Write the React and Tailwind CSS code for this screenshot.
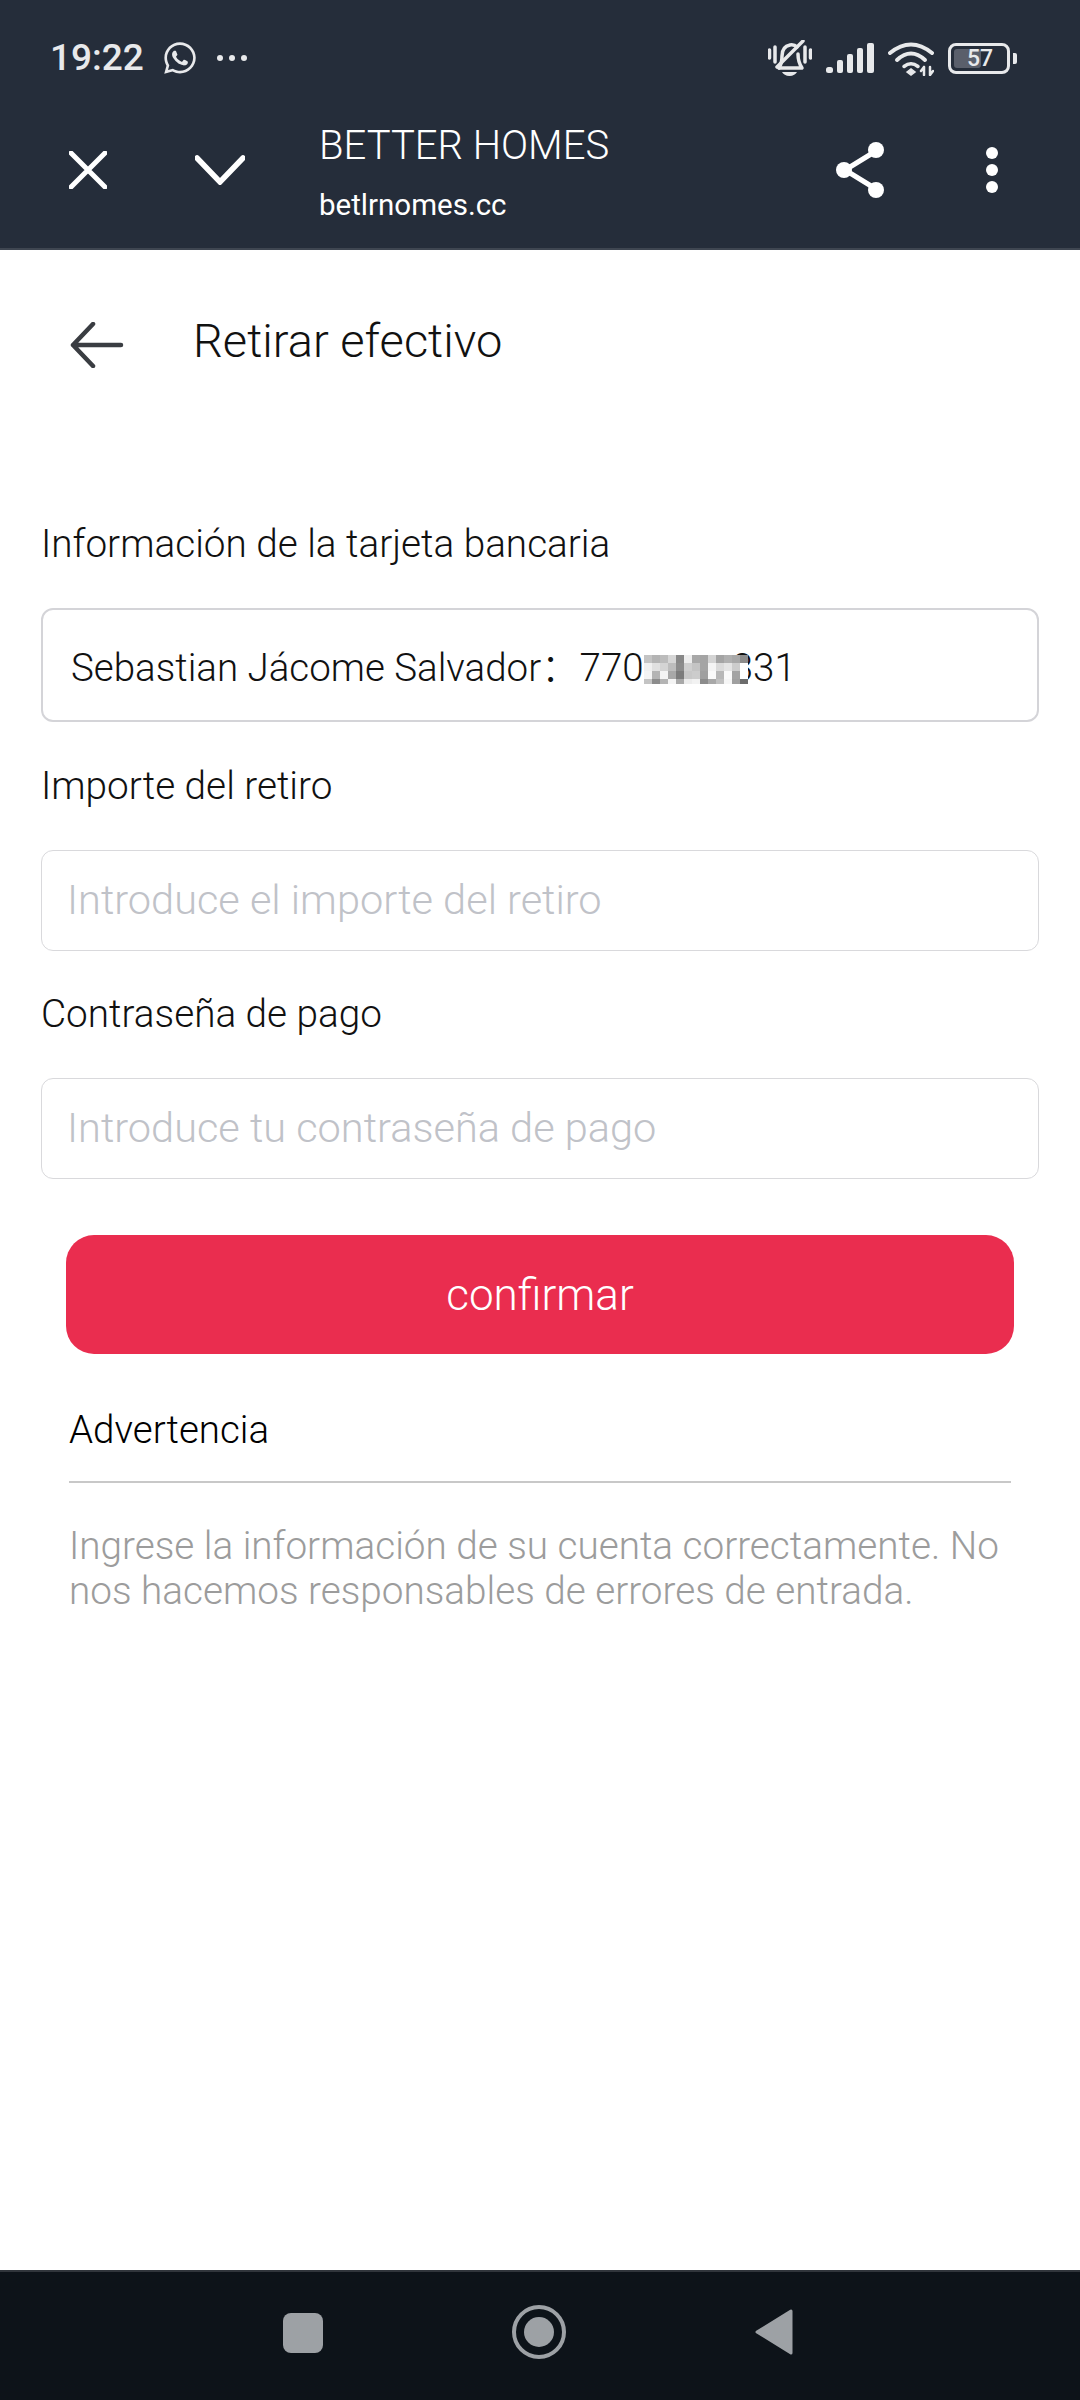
import React from 'react';
import { FaWhatsapp } from 'react-icons/fa';

const MOSAIC = [
  ['#c4c4c4', '#b4b4b4', '#bcbcbc', '#d6d6d6', '#888888', '#eeeeee', '#a8a8a8', '#a4a4a4', '#d4d4d4', '#a4a4a4', '#b0b0b0', '#a8a8a8', '#8c8c8c'],
  ['#f0f0f0', '#e0e0e0', '#d4d4d4', '#bdbdbd', '#8c8c8c', '#cfcfcf', '#c4c4c4', '#a4a4a4', '#f4f4f4', '#dadada', '#e4e4e4', '#cccccc', '#ffffff'],
  ['#f4f4f4', '#b4b4b4', '#f4f4f4', '#a8a8a8', '#7c7c7c', '#c8c8c8', '#cccccc', '#a0a0a0', '#fafafa', '#b8b8b8', '#fafafa', '#a4a4a4', '#ffffff'],
  ['#c4c4c4', '#8c8c8c', '#b4b4b4', '#f4f4f4', '#a8a8a8', '#ececec', '#f2f2f2', '#8c8c8c', '#a8a8a8', '#c0c0c0', '#f6f6f6', '#a0a0a0', '#6c6c6c'],
];

function Mosaic() {
  return (
    <svg width="104" height="29" viewBox="0 0 104 29" className="relative inline-block -mr-[16px] align-[-3px]" shapeRendering="crispEdges">
      {MOSAIC.map((row, y) =>
        row.map((c, x) => <rect key={x + '-' + y} x={x * 8} y={y * 8} width="8" height={y === 3 ? 5 : 8} fill={c} />)
      )}
    </svg>
  );
}

function MuteIcon() {
  return (
    <svg width="44" height="36" viewBox="0 0 44 36" fill="none" stroke="#e8e9eb" strokeWidth="3.5" strokeLinecap="round" strokeLinejoin="round">
      <path d="M1.5 10v8M7 7v15M37 7v15M42.5 10v8" />
      <path d="M11 28c2-3 3-7 3-12 0-6 3-10 8-11 3-.5 5 0 7 2" />
      <path d="M30 14c0 6 2 11 4 14H11" />
      <path d="M9 27 35 1" />
      <path d="M14 32h15c-1 2-4 4-7.500 4s-6.500-2-7.500-4z" fill="#e8e9eb" stroke="none" />
    </svg>
  );
}

function SignalIcon() {
  return (
    <svg width="48" height="30" viewBox="0 0 48 30" fill="#e8e9eb">
      <rect x="0" y="24" width="7" height="6" rx="2.500" />
      <rect x="11" y="17" width="6" height="13" rx="2" />
      <rect x="21" y="11" width="6" height="19" rx="2" />
      <rect x="31" y="5" width="6" height="25" rx="2" />
      <rect x="41" y="0" width="7" height="30" rx="2" />
    </svg>
  );
}

function WifiIcon() {
  return (
    <svg width="46" height="36" viewBox="0 0 46 36" fill="none" stroke="#e8e9eb" strokeLinecap="round">
      <path d="M2 13Q23-4 44 13" strokeWidth="4" />
      <path d="M9 20Q23 7 37 20" strokeWidth="4" />
      <path d="M16 26.500Q23 21 30 26.500" strokeWidth="3.500" />
      <path d="M19 32l4-3 4 3-4 3z" fill="#e8e9eb" strokeWidth="1.500" />
      <path d="M36 27v8M33 31l3-4M42 27v8M45 31l-3 4" strokeWidth="2.500" />
    </svg>
  );
}

function Battery() {
  return (
    <div className="flex items-center gap-[3px]">
      <div className="relative flex h-[31px] w-[62px] items-center rounded-[8px] border-[3px] border-[#e8e9eb] p-[3px]">
        <div className="h-full w-[27px] rounded-[3px] bg-[#5a5f6b]" />
        <span className="absolute left-[16px] top-0 text-[23px] leading-[25px] font-medium text-[#e8e9eb]">57</span>
      </div>
      <div className="h-[11px] w-[4px] rounded-r-[2px] bg-[#e8e9eb]" />
    </div>
  );
}

function Field({ label, children, tall }) {
  return (
    <div>
      <div className="mt-[1px] -mb-[1px] h-[46px] text-[38.7px] leading-[46px] font-light text-[#111111]">{label}</div>
      <div className={'mt-[42px] flex items-center rounded-[12px] ' + (tall ? 'h-[114px] border-2 border-[#d4d4d8] pl-[28px] pt-[2px]' : 'h-[101px] border border-[#d9d9dc] pl-[25px]')}>
        {children}
      </div>
    </div>
  );
}

export default function App() {
  return (
    <div className="flex h-screen w-[1080px] flex-col bg-white font-['Roboto','Noto_Sans_CJK_SC',sans-serif]">
      <header className="h-[250px] shrink-0 border-b-2 border-[#3f4651] bg-[#252d3a] text-white">
        <div className="flex h-[114px] items-start justify-between pl-[50px] pr-[63px] pt-[40px]">
          <div className="flex items-center">
            <span className="text-[37px] leading-[36px] font-medium text-[#e8e9eb]">19:22</span>
            <FaWhatsapp className="ml-[18px] text-[36px] text-[#e8e9eb]" />
            <div className="ml-[19px] flex gap-[6px]">
              <span className="h-[6px] w-[6px] rounded-full bg-[#e8e9eb]" />
              <span className="h-[6px] w-[6px] rounded-full bg-[#e8e9eb]" />
              <span className="h-[6px] w-[6px] rounded-full bg-[#e8e9eb]" />
            </div>
          </div>
          <div className="flex items-center gap-[14px]">
            <MuteIcon />
            <SignalIcon />
            <WifiIcon />
            <Battery />
          </div>
        </div>
        <div className="flex items-start pl-[69px]">
          <svg width="38" height="38" viewBox="0 0 38 38" className="mt-[37px]" stroke="#fff" strokeWidth="5" strokeLinecap="round">
            <path d="M2 2l34 34M36 2 2 36" />
          </svg>
          <svg width="50" height="30" viewBox="0 0 50 30" className="ml-[88px] mt-[41px]" fill="none" stroke="#fff" strokeWidth="5.500" strokeLinecap="round">
            <path d="M2 3l23 24L48 3" />
          </svg>
          <div className="ml-[74px] w-[516px]">
            <div className="mt-[9px] text-[40px] leading-[46px] font-light">BETTER HOMES</div>
            <div className="mt-[18px] text-[29.5px] leading-[36px] font-normal">betlrnomes.cc</div>
          </div>
          <svg width="52" height="58" viewBox="0 0 52 58" className="mt-[27px]" fill="#fff" stroke="#fff" strokeWidth="5">
            <path d="M41 10 10 29l31 19" fill="none" />
            <circle cx="41" cy="9" r="8" stroke="none" />
            <circle cx="9" cy="29" r="8" stroke="none" />
            <circle cx="41" cy="49" r="8" stroke="none" />
          </svg>
          <div className="ml-[99px] mt-[33px] flex flex-col gap-[5px]">
            <span className="h-[12px] w-[12px] rounded-full bg-white" />
            <span className="h-[12px] w-[12px] rounded-full bg-white" />
            <span className="h-[12px] w-[12px] rounded-full bg-white" />
          </div>
        </div>
      </header>

      <div className="flex h-[174px] shrink-0 items-center pl-[70px]">
        <svg width="54" height="46" viewBox="0 0 54 46" className="mt-[15px]" fill="none" stroke="#3a3d42" strokeWidth="4.500" strokeLinecap="round" strokeLinejoin="round">
          <path d="M51 23H3M23 2 3 23l20 21" />
        </svg>
        <h1 className="ml-[69px] mt-[8px] text-[47px] leading-[52px] font-light text-[#111111]">Retirar efectivo</h1>
      </div>

      <main className="mt-[96px] flex flex-col px-[41px]">
        <Field label="Información de la tarjeta bancaria" tall>
          <div className="mt-[3px] text-[38.5px] leading-[46px] font-light whitespace-nowrap text-[#111111]">
            Sebastian Jácome Salvador：<span>770</span>
            <Mosaic />
            <span>331</span>
          </div>
        </Field>
        <div className="mt-[40px]">
          <Field label="Importe del retiro">
            <div className="text-[41.5px] font-light text-[#c0c2c8]">Introduce el importe del retiro</div>
          </Field>
        </div>
        <div className="mt-[39px]">
          <Field label="Contraseña de pago">
            <div className="text-[41.5px] font-light text-[#c0c2c8]">Introduce tu contraseña de pago</div>
          </Field>
        </div>

        <button className="mx-[25px] mt-[56px] h-[119px] rounded-[28px] bg-[#ea2d4f] text-[44px] font-light text-white">confirmar</button>

        <div className="mx-[28px] mt-[53px]">
          <div className="h-[46px] text-[38.5px] leading-[46px] font-light text-black">Advertencia</div>
          <div className="mt-[28px] h-[2px] bg-[#c8c8c8]" />
          <p className="mt-[40px] text-[38.7px] leading-[45px] font-light text-[#9c9c9c]">
            Ingrese la información de su cuenta correctamente. No nos hacemos responsables de errores de entrada.
          </p>
        </div>
      </main>

      <nav className="mt-auto flex h-[130px] shrink-0 items-start border-t-2 border-[#30353b] bg-[#0d1319] pl-[283px] pt-[33px]">
        <div className="mt-[8px] h-[40px] w-[40px] rounded-[8px] bg-[#9da1a5]" />
        <div className="ml-[189px] flex h-[54px] w-[54px] items-center justify-center rounded-full border-[4px] border-[#9da1a5]">
          <div className="h-[30px] w-[30px] rounded-full bg-[#9da1a5]" />
        </div>
        <svg width="38" height="46" viewBox="0 0 38 46" className="ml-[189px] mt-[4px]" fill="#9da1a5" stroke="#9da1a5" strokeWidth="3" strokeLinejoin="round">
          <path d="M36 2v42L2 23z" />
        </svg>
      </nav>
    </div>
  );
}
